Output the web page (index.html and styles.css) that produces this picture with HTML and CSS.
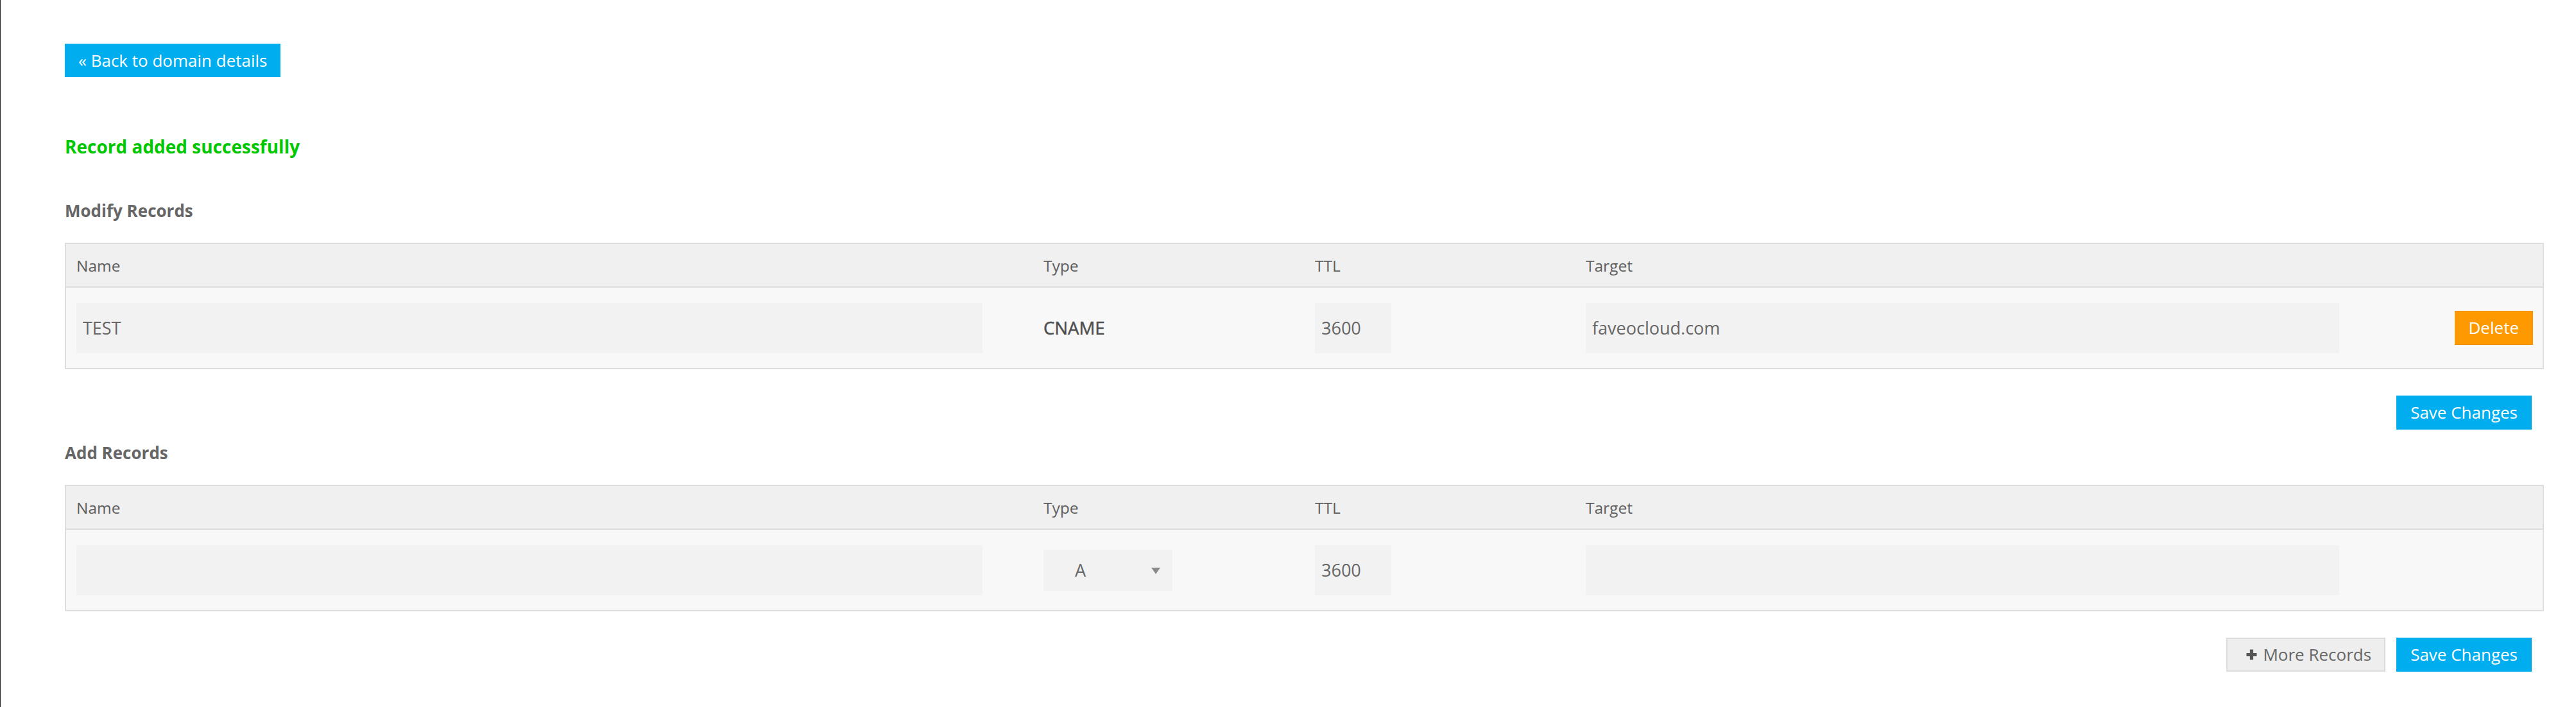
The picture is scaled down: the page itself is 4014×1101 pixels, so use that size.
FILE: index.html
```html
<!DOCTYPE html>
<html lang="en">
<head>
<meta charset="utf-8">
<title>Modify Records</title>
<link rel="stylesheet" href="styles.css">
</head>
<body>
<div class="page">
  <div class="top-row">
    <a class="btn btn-blue btn-back" href="#">« Back to domain details</a>
  </div>

  <p class="success">Record added successfully</p>

  <h3 class="section-title">Modify Records</h3>
  <div class="records">
    <div class="rec-row rec-head">
      <div class="cell">Name</div>
      <div class="cell">Type</div>
      <div class="cell">TTL</div>
      <div class="cell">Target</div>
      <div class="cell"></div>
    </div>
    <div class="rec-row rec-body">
      <div class="cell"><input class="field field-name" type="text" value="TEST"></div>
      <div class="cell type-text">CNAME</div>
      <div class="cell"><input class="field field-ttl" type="text" value="3600"></div>
      <div class="cell"><input class="field field-target" type="text" value="faveocloud.com"></div>
      <div class="cell cell-action"><a class="btn btn-orange" href="#">Delete</a></div>
    </div>
  </div>
  <div class="actions">
    <a class="btn btn-blue" href="#">Save Changes</a>
  </div>

  <h3 class="section-title section-add">Add Records</h3>
  <div class="records">
    <div class="rec-row rec-head">
      <div class="cell">Name</div>
      <div class="cell">Type</div>
      <div class="cell">TTL</div>
      <div class="cell">Target</div>
      <div class="cell"></div>
    </div>
    <div class="rec-row rec-body">
      <div class="cell"><input class="field field-name" type="text" value=""></div>
      <div class="cell">
        <span class="select-wrap">
          <select class="type-select">
            <option>A</option>
            <option>AAAA</option>
            <option>CNAME</option>
            <option>MX</option>
            <option>TXT</option>
          </select>
        </span>
      </div>
      <div class="cell"><input class="field field-ttl" type="text" value="3600"></div>
      <div class="cell"><input class="field field-target" type="text" value=""></div>
      <div class="cell"></div>
    </div>
  </div>
  <div class="actions">
    <a class="btn btn-grey" href="#"><svg class="plus" width="19" height="19" viewBox="0 0 19 19" aria-hidden="true"><path d="M9.5 1.5v16M1.5 9.5h16" stroke="#555" stroke-width="5.2" fill="none"/></svg>More Records</a>
    <a class="btn btn-blue" href="#">Save Changes</a>
  </div>
</div>
</body>
</html>
```

FILE: styles.css
```css
html, body {
  margin: 0;
  padding: 0;
  background: #ffffff;
}

body {
  font-family: "Open Sans", "Noto Sans", "DejaVu Sans", sans-serif;
  color: #666666;
}

.page {
  min-height: 1101px;
  box-sizing: border-box;
  border-left: 1px solid #222222;
  padding: 68px 50px 0 100px;
}

.top-row {
  display: flex;
}

.btn {
  display: inline-flex;
  align-items: center;
  box-sizing: border-box;
  font-size: 26px;
  line-height: 35px;
  height: 53px;
  padding: 0 22px;
  text-decoration: none;
  white-space: nowrap;
}

.btn-blue {
  background: #00aeef;
  color: #ffffff;
}

.btn-back {
  height: 52px;
  padding: 0 21px;
}

.btn-orange {
  background: #ff9900;
  color: #ffffff;
  border-top: 1px solid #f08c00;
  border-bottom: 1px solid #f08c00;
}

.btn-grey {
  background: #eeeeee;
  color: #666666;
  border: 2px solid #dddddd;
  padding: 0 20px 0 28px;
  gap: 8px;
}

.plus {
  display: block;
  flex: none;
}

.success {
  margin: 89px 0 0;
  font-size: 28px;
  line-height: 38px;
  font-weight: 700;
  color: #00c800;
}

.section-title {
  margin: 64px 0 0;
  font-size: 26px;
  line-height: 35px;
  font-weight: 700;
  color: #666666;
}

.section-add {
  margin-top: 19px;
}

.records {
  margin-top: 32px;
  border: 2px solid #dddddd;
  background: #f8f8f8;
}

.rec-row {
  display: grid;
  grid-template-columns: 1507px 423px 422px 1174px 1fr;
  padding: 0 15px 0 16px;
  align-items: center;
}

.rec-head {
  height: 66px;
  background: #f0f0f0;
  border-bottom: 2px solid #dddddd;
  font-size: 24.5px;
  color: #5e5e5e;
}

.rec-body {
  height: 125px;
}

.cell {
  display: flex;
  align-items: center;
  min-width: 0;
}

.cell-action {
  justify-content: flex-end;
}

.type-text {
  font-size: 27.5px;
  font-weight: 400;
  color: #4f4f4f;
  -webkit-text-stroke: 0.5px #4f4f4f;
}

.field {
  box-sizing: border-box;
  height: 78px;
  border: none;
  outline: none;
  background: #f2f2f2;
  padding: 0 10px;
  font-family: "Open Sans", "Noto Sans", "DejaVu Sans", sans-serif;
  font-size: 27px;
  color: #666666;
}

.field-name {
  width: 1412px;
}

.field-ttl {
  width: 119px;
}

.field-target {
  width: 1174px;
}

.select-wrap {
  position: relative;
  display: block;
  width: 201px;
  height: 64px;
}

.select-wrap::after {
  content: "";
  position: absolute;
  left: 168px;
  top: 28px;
  border-left: 7px solid transparent;
  border-right: 7px solid transparent;
  border-top: 10px solid #8a8a8a;
  pointer-events: none;
}

.type-select {
  -webkit-appearance: none;
  appearance: none;
  display: block;
  width: 201px;
  height: 64px;
  border: none;
  outline: none;
  border-radius: 0;
  background: #f2f2f2;
  padding: 0 0 0 49px;
  font-family: "Open Sans", "Noto Sans", "DejaVu Sans", sans-serif;
  font-size: 27px;
  color: #666666;
}

.actions {
  display: flex;
  justify-content: flex-end;
  gap: 17px;
  margin-top: 41px;
  padding-right: 19px;
}
```
